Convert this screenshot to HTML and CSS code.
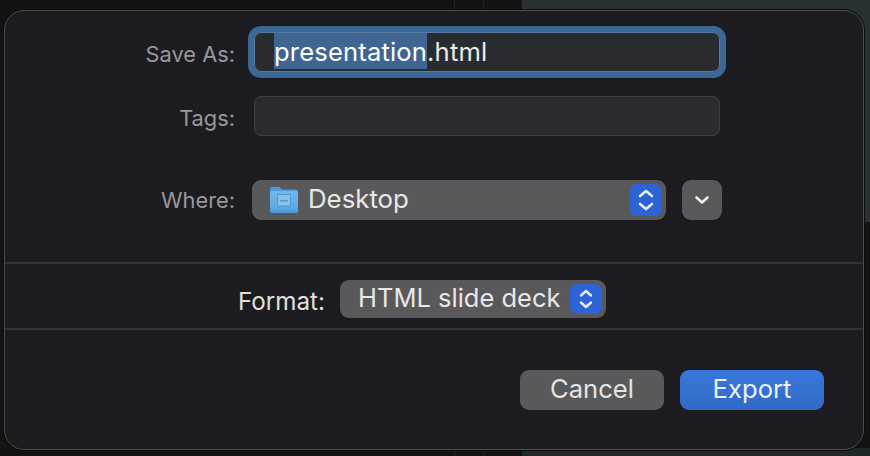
FILE: index.html
```html
<!DOCTYPE html>
<html lang="en">
<head>
<meta charset="utf-8">
<title>Export</title>
<link rel="stylesheet" href="styles.css">
</head>
<body>
<div class="backdrop">
  <span class="bg-line line-a"></span>
  <span class="bg-line line-b"></span>
  <span class="bg-teal"></span>
  <span class="bg-low"></span>
</div>
<main class="dialog">
  <section class="top">
    <div class="row row-name">
      <label class="label">Save As:</label>
      <div class="input focused"><span class="sel">presentation</span>.html</div>
    </div>
    <div class="row row-tags">
      <label class="label">Tags:</label>
      <div class="input tags"></div>
    </div>
    <div class="row row-where">
      <label class="label">Where:</label>
      <div class="popup where">
        <svg class="folder" viewBox="0 0 28 26" width="28" height="26">
          <defs>
            <linearGradient id="fb" x1="0" y1="0" x2="0" y2="1">
              <stop offset="0" stop-color="#6fbaf0"/>
              <stop offset="0.8" stop-color="#5aa8e6"/>
              <stop offset="1" stop-color="#4793d4"/>
            </linearGradient>
          </defs>
          <path d="M0 2.500C0 1 1 0 2.500 0H9.500L12 2.500H25.500C27 2.500 28 3.500 28 5V23.500C28 25 27 26 25.500 26H2.500C1 26 0 25 0 23.500Z" fill="#4a9bdc"/>
          <rect x="0" y="4" width="28" height="22" rx="2" fill="url(#fb)"/>
          <rect x="7.500" y="7.500" width="13" height="11.500" rx="1" fill="#88c0ea" stroke="#5596cc" stroke-width="1"/>
          <rect x="10" y="13" width="8" height="1.500" fill="#5596cc"/>
        </svg>
        <span class="popup-text">Desktop</span>
        <span class="stepper">
          <svg viewBox="0 0 32 32" width="32" height="32"><path d="M10 12L16 7L22 12M10 20L16 25L22 20" fill="none" stroke="#e6edfb" stroke-width="2.600" stroke-linecap="round" stroke-linejoin="round"/></svg>
        </span>
      </div>
      <div class="disclosure">
        <svg viewBox="0 0 16 10" width="16" height="10"><path d="M2.500 2.500L8 7.500L13.500 2.500" fill="none" stroke="#f0f0f0" stroke-width="2.600" stroke-linecap="round" stroke-linejoin="round"/></svg>
      </div>
    </div>
  </section>
  <section class="middle">
    <label class="label-format">Format:</label>
    <div class="popup format">
      <span class="popup-text">HTML slide deck</span>
      <span class="stepper small">
        <svg viewBox="0 0 32 30" width="32" height="30"><path d="M11 11.500L16 7L21 11.500M11 18.500L16 23L21 18.500" fill="none" stroke="#e6edfb" stroke-width="2.400" stroke-linecap="round" stroke-linejoin="round"/></svg>
      </span>
    </div>
  </section>
  <section class="actions">
    <button class="btn cancel">Cancel</button>
    <button class="btn export">Export</button>
  </section>
</main>
</body>
</html>
```

FILE: styles.css
```css
* { box-sizing: border-box; }
html, body { margin: 0; padding: 0; }
body {
  width: 870px;
  height: 456px;
  overflow: hidden;
  position: relative;
  background: #131313;
  font-family: "Inter", "Liberation Sans", sans-serif;
  padding: 10px 6px 6px 4px;
}
.backdrop { position: absolute; inset: 0; }
.bg-line { position: absolute; top: 0; bottom: 0; width: 1px; background: #222; }
.line-a { left: 454px; }
.line-b { left: 483px; }
.bg-teal { position: absolute; left: 522px; top: 0; right: 0; height: 222px; background: #283034; }
.bg-low { position: absolute; left: 522px; top: 448px; right: 0; bottom: 0; background: #20272a; }
.dialog {
  position: relative;
  width: 860px;
  height: 440px;
  background: #1c1c20;
  border: 1.500px solid #4d4d4f;
  border-radius: 20px;
  box-shadow: 0 0 0 1px #0c0c0c;
  display: flex;
  flex-direction: column;
}
.top { height: 253px; padding-top: 15px; border-bottom: 2px solid #323236; }
.row { display: flex; align-items: center; }
.label {
  width: 230px;
  text-align: right;
  font-size: 21.800px;
  color: #98989a;
  flex: none;
}
.row-name { height: 52px; }
.row-name .label, .row-tags .label { padding-top: 4px; }
.row-tags { height: 40px; margin-top: 18px; }
.row-where { height: 40px; margin-top: 44px; }
.input {
  margin-left: 19px;
  width: 466px;
  height: 40px;
  border-radius: 7px;
  background: #2a2b2e;
  border: 1px solid #3d3e41;
}
.focused {
  margin-left: 13px;
  width: 478px;
  height: 52px;
  border: 6px solid #3b6896;
  border-radius: 13px;
  box-shadow: inset 0 0 0 1px #5a7d9f;
  color: #ececec;
  font-size: 25.600px;
  letter-spacing: 0.150px;
  line-height: 40px;
  padding-left: 20px;
  white-space: nowrap;
}
.sel { background: #3f6593; color: #fff; display: inline-block; height: 36px; line-height: 38px; vertical-align: top; margin-top: 1px; }
.popup {
  display: flex;
  align-items: center;
  background: #59595b;
  color: #e8e8e8;
  position: relative;
}
.where {
  margin-left: 17px;
  width: 414px;
  height: 40px;
  border-radius: 9px;
  padding: 0 4px 0 18px;
  font-size: 25.800px;
}
.folder { flex: none; margin-right: 10px; }
.popup-text { flex: 1; white-space: nowrap; padding-bottom: 3px; }
.stepper {
  flex: none;
  width: 32px;
  height: 32px;
  border-radius: 7px;
  background: #2e63d5;
  display: block;
}
.stepper.small { height: 30px; }
.stepper svg { display: block; }
.disclosure {
  margin-left: 16px;
  width: 40px;
  height: 40px;
  border-radius: 9px;
  background: #59595b;
  display: flex;
  align-items: center;
  justify-content: center;
}
.middle {
  height: 66px;
  border-bottom: 2px solid #323236;
  display: flex;
  align-items: center;
  padding: 6px 0 0 233px;
}
.label-format { font-size: 24.200px; color: #e0e0e0; width: 87px; flex: none; text-align: right; padding-top: 4px; }
.format {
  margin-left: 15px;
  width: 266px;
  height: 38px;
  border-radius: 9px;
  padding: 0 4px 0 18px;
  font-size: 25.500px;
}
.actions {
  flex: 1;
  display: flex;
  justify-content: flex-end;
  align-items: flex-start;
  gap: 16px;
  padding: 40px 39px 0 0;
}
.btn {
  width: 144px;
  height: 40px;
  border: 0;
  border-radius: 9px;
  font-family: inherit;
  font-size: 25.600px;
  padding: 0 0 3px;
}
.cancel { background: #59595b; color: #e4e4e4; }
.export { background: linear-gradient(#3a78dd, #3169c4); color: #ecf2fc; }
```
